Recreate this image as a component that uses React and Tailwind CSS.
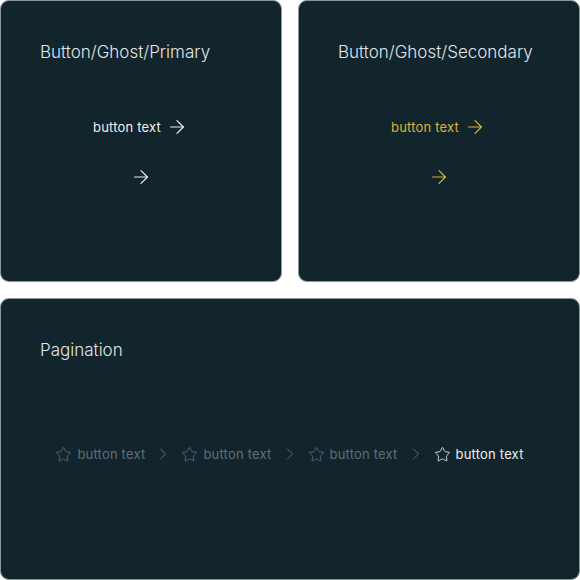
import { ArrowRight, Star, ChevronRight } from "lucide-react";

const font = { fontFamily: "Inter, 'Noto Sans', sans-serif" };

function Card({ title, className = "", children }) {
  return (
    <div
      className={`rounded-[9px] border border-[#8a9599] bg-[#12242c] pt-[39px] pl-[39px] pr-[40px] ${className}`}>
      <h2 className="text-[17px] leading-[24px] font-light text-[#e3e6e7]">
        {title}
      </h2>
      {children}
    </div>
  );
}

function GhostDemo({ color }) {
  return (
    <div className={`flex flex-col items-center pt-[52px] ${color}`}>
      <button className="flex items-center gap-[5px] text-[13px] leading-[16px] tracking-[0.2px]">
        button text
        <ArrowRight size={22} strokeWidth={1.3} />
      </button>
      <button className="mt-[28px] flex items-center">
        <ArrowRight size={22} strokeWidth={1.3} />
      </button>
    </div>
  );
}

function Crumb({ active }) {
  return (
    <div
      className={`flex items-center gap-[5px] text-[13px] leading-[16px] tracking-[0.2px] ${
        active ? "text-[#eef0f1]" : "text-[#5f6f75]"
      }`}>
      <Star size={17} strokeWidth={1.2} />
      button text
    </div>
  );
}

export default function App() {
  const crumbs = [false, false, false, true];
  return (
    <div className="w-[580px] h-[580px] bg-white flex flex-col gap-[16px]" style={font}>
      <div className="flex gap-[16px] h-[282px]">
        <Card title="Button/Ghost/Primary" className="w-[282px]">
          <GhostDemo color="text-[#eef0f1]" />
        </Card>
        <Card title="Button/Ghost/Secondary" className="w-[282px]">
          <GhostDemo color="text-[#dab437]" />
        </Card>
      </div>
      <Card title="Pagination" className="h-[282px]">
        <div className="flex items-center justify-center gap-[8px] pt-[82px] text-[#5f6f75]">
          {crumbs.map((a, i) => (
            <div key={i} className="flex items-center gap-[8px]">
              <Crumb active={a} />
              {i < crumbs.length - 1 && (
                <ChevronRight size={20} strokeWidth={1.2} />
              )}
            </div>
          ))}
        </div>
      </Card>
    </div>
  );
}
